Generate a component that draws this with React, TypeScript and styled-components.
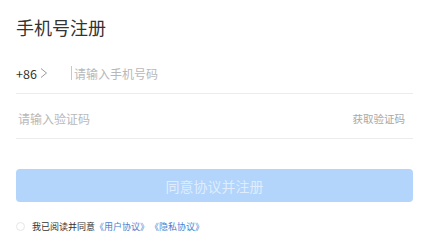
import styled, { createGlobalStyle } from "styled-components";

const GlobalStyle = createGlobalStyle`
  body {
    margin: 0;
    background: #ffffff;
    font-family: "Noto Sans CJK SC", "Noto Sans", sans-serif;
  }
`;

export default function App() {
  return (
    <>
      <GlobalStyle />
      <Page>
        <Title>手机号注册</Title>
        <Field>
          <Prefix>
            +86
            <svg width="8" height="12" viewBox="0 0 8 12">
              <polyline points="1,1.5 6.5,6 1,10.5" fill="none" stroke="#9a9a9a" strokeWidth="1" />
            </svg>
          </Prefix>
          <Caret />
          <Input placeholder="请输入手机号码" />
        </Field>
        <Field>
          <Input $first placeholder="请输入验证码" />
          <CodeButton>获取验证码</CodeButton>
        </Field>
        <Submit>同意协议并注册</Submit>
        <Agree>
          <Radio />
          <span>我已阅读并同意</span>
          <Doc>《用户协议》</Doc>
          <Doc>《隐私协议》</Doc>
        </Agree>
      </Page>
    </>
  );
}

const Page = styled.div`
  display: flex;
  flex-direction: column;
  padding: 14px 18px 0 16px;
`;

const Title = styled.h1`
  margin: 0 0 9px 0;
  font-size: 18px;
  line-height: 26px;
  font-weight: 400;
  color: #333;
`;

const Field = styled.div`
  display: flex;
  align-items: center;
  height: 45px;
  padding-top: 4px;
  box-sizing: border-box;
  border-bottom: 1px solid #ececec;
`;

const Prefix = styled.div`
  display: flex;
  align-items: center;
  gap: 3px;
  width: 55px;
  font-size: 12.5px;
  color: #333;
`;

const Caret = styled.span`
  width: 1px;
  height: 14px;
  background: #c8c8c8;
  margin-right: 2px;
`;

const Input = styled.input<{ $first?: boolean }>`
  flex: 1;
  min-width: 0;
  border: none;
  outline: none;
  padding: 0;
  margin-left: ${(p) => (p.$first ? "2px" : "0")};
  font-family: inherit;
  font-size: 12px;
  color: #333;
  background: transparent;
  &::placeholder {
    color: #b8b8b8;
  }
`;

const CodeButton = styled.span`
  font-size: 10.5px;
  color: #a8a8a8;
  margin-right: 8px;
`;

const Submit = styled.button`
  margin-top: 30px;
  height: 33px;
  border: none;
  border-radius: 4px;
  background: #b3d4fb;
  color: rgba(255, 255, 255, 0.6);
  font-family: inherit;
  font-size: 14px;
`;

const Agree = styled.div`
  display: flex;
  align-items: center;
  margin-top: 16px;
  height: 16px;
  font-size: 9px;
  color: #333;
`;

const Radio = styled.span`
  width: 7px;
  height: 7px;
  border: 1px solid #e6e6e6;
  border-radius: 50%;
  margin-right: 7px;
`;

const Doc = styled.span`
  color: #4a7fd2;
  & + & {
    margin-left: 1px;
  }
`;
